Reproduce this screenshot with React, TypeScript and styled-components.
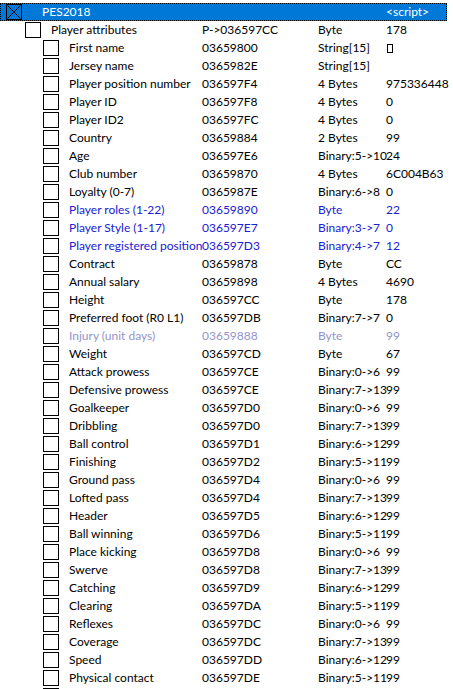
import React from "react";
import styled, { createGlobalStyle } from "styled-components";

const Global = createGlobalStyle`
  html, body { margin: 0; padding: 0; background: #fff; }
  body { font-family: Lato, "Noto Sans", sans-serif; font-size: 12px; color: #000; }
`;

type Tone = "normal" | "blue" | "dim" | "selected";

const List = styled.div`
  width: 453px;
  height: 689px;
  overflow: hidden;
  padding-top: 3px;
  box-sizing: border-box;
  background: #fff;
`;

const colorOf = (t: Tone) =>
  t === "blue" ? "#2020d2" : t === "dim" ? "#9494cc" : t === "selected" ? "#fff" : "#000";

const Row = styled.div<{ $tone: Tone }>`
  display: grid;
  grid-template-columns: 202px 116px 68px 1fr;
  width: 447px;
  height: 18px;
  line-height: 18px;
  white-space: nowrap;
  box-sizing: border-box;
  color: ${(p) => colorOf(p.$tone)};
  background: ${(p) => (p.$tone === "selected" ? "#0078d7" : "transparent")};
  outline: ${(p) => (p.$tone === "selected" ? "1px dotted #000" : "none")};
  outline-offset: -1px;
`;

const DescCell = styled.div<{ $indent: number }>`
  display: flex;
  align-items: center;
  padding-left: ${(p) => p.$indent}px;
`;

const Check = styled.span<{ $gap: number }>`
  flex: none;
  width: 16px;
  height: 16px;
  box-sizing: border-box;
  border: 1px solid #000;
  background: transparent;
  margin-right: ${(p) => p.$gap}px;
  display: inline-flex;
`;

const Label = styled.span``;

const Cell = styled.div``;

const MissingGlyph = styled.span`
  display: inline-block;
  width: 6px;
  height: 9px;
  border: 1px solid #000;
  box-sizing: border-box;
  vertical-align: -1px;
  margin-left: 1px;
`;

type Item = [string, string, string, string, Tone?];

const items: Item[] = [
  ["First name", "03659800", "String[15]", "□"],
  ["Jersey name", "0365982E", "String[15]", ""],
  ["Player position number", "036597F4", "4 Bytes", "975336448"],
  ["Player ID", "036597F8", "4 Bytes", "0"],
  ["Player ID2", "036597FC", "4 Bytes", "0"],
  ["Country", "03659884", "2 Bytes", "99"],
  ["Age", "036597E6", "Binary:5->10", "24"],
  ["Club number", "03659870", "4 Bytes", "6C004B63"],
  ["Loyalty (0-7)", "0365987E", "Binary:6->8", "0"],
  ["Player roles (1-22)", "03659890", "Byte", "22", "blue"],
  ["Player Style (1-17)", "036597E7", "Binary:3->7", "0", "blue"],
  ["Player registered position", "036597D3", "Binary:4->7", "12", "blue"],
  ["Contract", "03659878", "Byte", "CC"],
  ["Annual salary", "03659898", "4 Bytes", "4690"],
  ["Height", "036597CC", "Byte", "178"],
  ["Preferred foot (R0 L1)", "036597DB", "Binary:7->7", "0"],
  ["Injury (unit days)", "03659888", "Byte", "99", "dim"],
  ["Weight", "036597CD", "Byte", "67"],
  ["Attack prowess", "036597CE", "Binary:0->6", "99"],
  ["Defensive prowess", "036597CE", "Binary:7->13", "99"],
  ["Goalkeeper", "036597D0", "Binary:0->6", "99"],
  ["Dribbling", "036597D0", "Binary:7->13", "99"],
  ["Ball control", "036597D1", "Binary:6->12", "99"],
  ["Finishing", "036597D2", "Binary:5->11", "99"],
  ["Ground pass", "036597D4", "Binary:0->6", "99"],
  ["Lofted pass", "036597D4", "Binary:7->13", "99"],
  ["Header", "036597D5", "Binary:6->12", "99"],
  ["Ball winning", "036597D6", "Binary:5->11", "99"],
  ["Place kicking", "036597D8", "Binary:0->6", "99"],
  ["Swerve", "036597D8", "Binary:7->13", "99"],
  ["Catching", "036597D9", "Binary:6->12", "99"],
  ["Clearing", "036597DA", "Binary:5->11", "99"],
  ["Reflexes", "036597DC", "Binary:0->6", "99"],
  ["Coverage", "036597DC", "Binary:7->13", "99"],
  ["Speed", "036597DD", "Binary:6->12", "99"],
  ["Physical contact", "036597DE", "Binary:5->11", "99"],
  ["", "", "", ""],
];

const CrossMark = () => (
  <svg width="14" height="14" viewBox="0 0 14 14" style={{ display: "block" }}>
    <path d="M0.5 0.5 L13.5 13.5 M13.5 0.5 L0.5 13.5" stroke="#000" strokeWidth="1" />
  </svg>
);

export default function App() {
  return (
    <>
      <Global />
      <List>
        <Row $tone="selected">
          <DescCell $indent={6}>
            <Check $gap={20}>
              <CrossMark />
            </Check>
            <Label>PES2018</Label>
          </DescCell>
          <Cell />
          <Cell />
          <Cell>&lt;script&gt;</Cell>
        </Row>
        <Row $tone="normal">
          <DescCell $indent={25}>
            <Check $gap={10} />
            <Label>Player attributes</Label>
          </DescCell>
          <Cell>P-&gt;036597CC</Cell>
          <Cell>Byte</Cell>
          <Cell>178</Cell>
        </Row>
        {items.map(([d, a, t, v, tone], i) => (
          <Row key={i} $tone={tone ?? "normal"}>
            <DescCell $indent={43}>
              <Check $gap={10} />
              <Label>{d}</Label>
            </DescCell>
            <Cell>{a}</Cell>
            <Cell>{t}</Cell>
            <Cell>{v === "□" ? <MissingGlyph /> : v}</Cell>
          </Row>
        ))}
      </List>
    </>
  );
}
